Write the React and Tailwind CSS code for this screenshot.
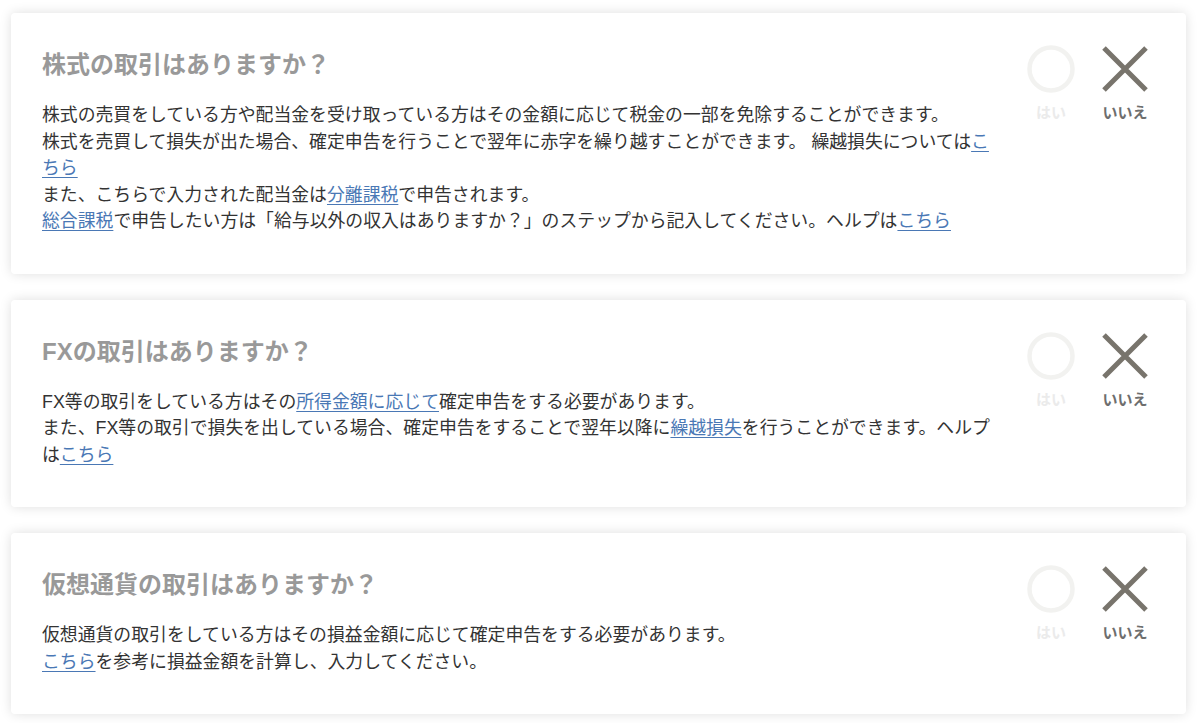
// App.jsx — 取引の有無をたずねる質問カード

const questions = [
  {
    title: "株式の取引はありますか？",
    body: (
      <>
        株式の売買をしている方や配当金を受け取っている方はその金額に応じて税金の一部を免除することができます。
        <br />
        株式を売買して損失が出た場合、確定申告を行うことで翌年に赤字を繰り越すことができます。 繰越損失については
        <Link>こちら</Link>
        <br />
        また、こちらで入力された配当金は<Link>分離課税</Link>で申告されます。
        <br />
        <Link>総合課税</Link>で申告したい方は「給与以外の収入はありますか？」のステップから記入してください。ヘルプは
        <Link>こちら</Link>
      </>
    ),
  },
  {
    title: "FXの取引はありますか？",
    body: (
      <>
        FX等の取引をしている方はその<Link>所得金額に応じて</Link>確定申告をする必要があります。
        <br />
        また、FX等の取引で損失を出している場合、確定申告をすることで翌年以降に<Link>繰越損失</Link>を行うことができます。ヘルプは
        <Link>こちら</Link>
      </>
    ),
  },
  {
    title: "仮想通貨の取引はありますか？",
    body: (
      <>
        仮想通貨の取引をしている方はその損益金額に応じて確定申告をする必要があります。
        <br />
        <Link>こちら</Link>を参考に損益金額を計算し、入力してください。
      </>
    ),
  },
];

function Link({ children }) {
  return (
    <a href="#" className="text-[#4a78b5] underline underline-offset-[3px] decoration-[1px]">
      {children}
    </a>
  );
}

function Answers() {
  return (
    <div className="flex gap-[26px] pt-8 pr-[37px] shrink-0">
      <button className="flex flex-col items-center w-[48px]">
        <svg width="48" height="48" viewBox="0 0 48 48">
          <circle cx="24" cy="24" r="21.5" fill="none" stroke="#f2f2f0" strokeWidth="4.5" />
        </svg>
        <span className="mt-[10px] text-[15px] leading-5 font-bold text-[#ebebeb]">はい</span>
      </button>
      <button className="flex flex-col items-center w-[48px]">
        <svg width="48" height="48" viewBox="0 0 48 48">
          <path d="M3 3 L45 45 M45 3 L3 45" stroke="#78746c" strokeWidth="5" />
        </svg>
        <span className="mt-[10px] text-[15px] leading-5 font-bold text-[#6e6e6e] whitespace-nowrap">
          いいえ
        </span>
      </button>
    </div>
  );
}

export default function App() {
  return (
    <div
      className="min-h-screen bg-white pt-[13px] pl-[11px] pr-[14px] pb-4 flex flex-col gap-[26px]"
      style={{ fontFamily: '"Liberation Sans", "Noto Sans CJK JP", sans-serif' }}
    >
      {questions.map((q, i) => (
        <section
          key={i}
          className="flex justify-between bg-white rounded-[4px] shadow-[0_0_12px_rgba(0,0,0,0.13)]"
        >
          <div className="w-[987px] pl-[31px] pt-10 pb-[39px]">
            <h2 className="text-[24px] leading-6 font-bold text-[#999999]">{q.title}</h2>
            <p className="mt-[25px] text-[17.85px] leading-[26.5px] text-[#333333]">{q.body}</p>
          </div>
          <Answers />
        </section>
      ))}
    </div>
  );
}
